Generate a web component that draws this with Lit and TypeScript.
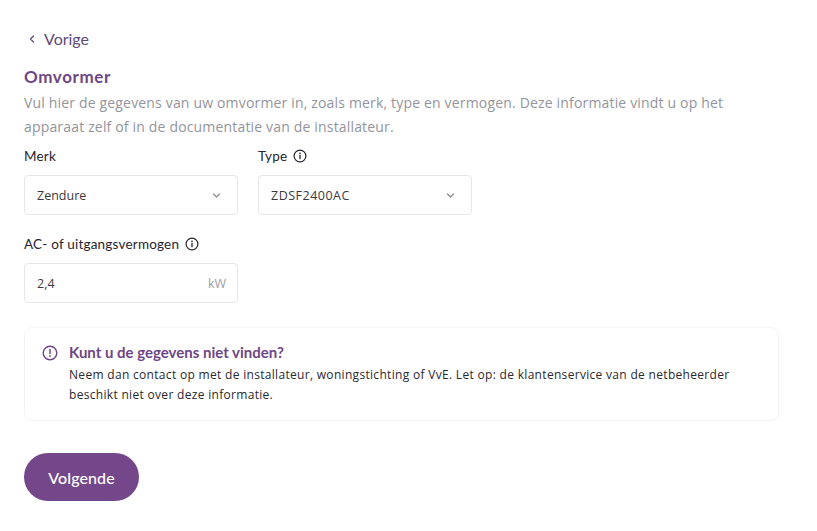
import { LitElement, html, css, svg } from "lit";
import { customElement } from "lit/decorators.js";

const chevronDown = svg`<path d="M4.5 6l3 3 3-3" fill="none" stroke="#8b8b93" stroke-width="1.2" stroke-linecap="round" stroke-linejoin="round"/>`;
const info = html`<svg class="info" viewBox="0 0 14 14" width="14" height="14"><circle cx="7" cy="7" r="5.9" fill="none" stroke="#26242c" stroke-width="1.2"/><path d="M7 6.4v3.3" stroke="#26242c" stroke-width="1.3" stroke-linecap="round"/><circle cx="7" cy="4.3" r=".85" fill="#26242c"/></svg>`;

@customElement("app-root")
export class AppRoot extends LitElement {
  static styles = css`
    :host { display: block; width: 817px; height: 531px; box-sizing: border-box; background: #fff; padding: 30px 24px 0; font-family: Lato, "Liberation Sans", sans-serif; color: #26242c; overflow: hidden; }
    .back { display: flex; align-items: center; gap: 7px; height: 18px; font-size: 16px; line-height: 18px; color: #5f4a78; padding-left: 3px; }
    .title { margin: 19px 0 0; height: 20px; font-size: 17px; line-height: 20px; letter-spacing: .6px; font-weight: 700; color: #6f4685; }
    .intro { margin: 4px 0 0; width: 740px; font-family: "Open Sans", sans-serif; font-size: 14px; letter-spacing: .17px; line-height: 24px; color: #93949c; }
    .row { display: flex; gap: 20px; }
    .r1 { margin-top: 7px; }
    .r2 { margin-top: 19px; }
    .field { width: 214px; display: flex; flex-direction: column; gap: 9px; }
    .label { display: flex; align-items: center; gap: 6px; height: 20px; font-size: 13.5px; line-height: 20px; letter-spacing: .2px; }
    .control { box-sizing: border-box; height: 40px; border: 1px solid #e6e6ea; border-radius: 4px; padding: 0 13px 0 12px; display: flex; align-items: center; justify-content: space-between; font-family: "Open Sans", sans-serif; font-size: 12.5px; color: #3a3840; }
    .wide { letter-spacing: .5px; }
    .unit { color: #9c9ca3; margin-right: -2px; }
    .note { box-sizing: border-box; margin-top: 24px; width: 755px; height: 94px; border: 1px solid #f4f4f6; border-radius: 8px; padding: 14px 17px; display: flex; gap: 11px; }
    .note svg { flex: none; margin-top: 3px; }
    .note h3 { margin: 0; height: 20px; font-size: 15px; line-height: 20px; font-weight: 700; color: #6f4685; }
    .note p { margin: 3px 0 0; font-family: "Open Sans", sans-serif; font-size: 12px; letter-spacing: .31px; line-height: 20px; color: #2a2830; }
    button { display: block; margin-top: 32px; width: 115px; height: 48px; border: 0; border-radius: 24px; background: #74478b; color: #fff; font: 500 16px Lato, sans-serif; letter-spacing: .1px; }
  `;
  render() {
    return html`
      <div class="back"><svg width="10" height="10" viewBox="0 0 10 10"><path d="M6.5 2L3.5 5l3 3" fill="none" stroke="#5f4a78" stroke-width="1.3" stroke-linecap="round" stroke-linejoin="round"/></svg><span>Vorige</span></div>
      <h2 class="title">Omvormer</h2>
      <p class="intro">Vul hier de gegevens van uw omvormer in, zoals merk, type en vermogen. Deze informatie vindt u op het apparaat zelf of in de documentatie van de installateur.</p>
      <div class="row r1">
        <div class="field"><div class="label">Merk</div><div class="control"><span>Zendure</span><svg width="15" height="15" viewBox="0 0 15 15">${chevronDown}</svg></div></div>
        <div class="field"><div class="label">Type ${info}</div><div class="control"><span class="wide">ZDSF2400AC</span><svg width="15" height="15" viewBox="0 0 15 15">${chevronDown}</svg></div></div>
      </div>
      <div class="row r2">
        <div class="field"><div class="label">AC- of uitgangsvermogen ${info}</div><div class="control"><span>2,4</span><span class="unit">kW</span></div></div>
      </div>
      <div class="note">
        <svg width="16" height="16" viewBox="0 0 16 16"><circle cx="8" cy="8" r="6.8" fill="none" stroke="#6f4685" stroke-width="1.4"/><path d="M8 4.6v4" stroke="#6f4685" stroke-width="1.5" stroke-linecap="round"/><circle cx="8" cy="11" r=".9" fill="#6f4685"/></svg>
        <div><h3>Kunt u de gegevens niet vinden?</h3><p>Neem dan contact op met de installateur, woningstichting of VvE. Let op: de klantenservice van de netbeheerder<br>beschikt niet over deze informatie.</p></div>
      </div>
      <button>Volgende</button>
    `;
  }
}
